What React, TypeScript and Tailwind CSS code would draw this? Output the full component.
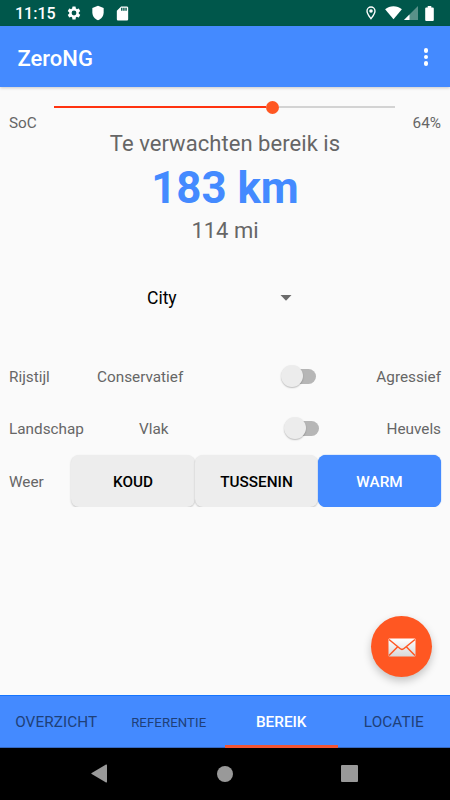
import React from "react";

function StatusBar() {
  return (
    <div className="flex h-[26px] items-center bg-[#00574b] pl-[15px] text-white">
      <span className="mt-[2px] w-[51px] text-[16px] leading-[26px] font-medium">11:15</span>
      <svg className="h-[16px] w-[16px]" viewBox="0 0 24 24" fill="currentColor">
        <path d="M19.14 12.94c.04-.3.06-.61.06-.94 0-.32-.02-.64-.07-.94l2.03-1.58a.49.49 0 0 0 .12-.61l-1.92-3.32a.49.49 0 0 0-.59-.22l-2.39.96a7 7 0 0 0-1.62-.94l-.36-2.54a.48.48 0 0 0-.48-.41h-3.84a.47.47 0 0 0-.47.41l-.36 2.54c-.59.24-1.13.57-1.62.94l-2.39-.96a.48.48 0 0 0-.59.22L2.74 8.87a.47.47 0 0 0 .12.61l2.03 1.58c-.05.3-.09.63-.09.94s.02.64.07.94l-2.03 1.58a.49.49 0 0 0-.12.61l1.92 3.32c.12.22.37.29.59.22l2.39-.96c.5.38 1.03.7 1.62.94l.36 2.54c.05.24.24.41.48.41h3.84c.24 0 .44-.17.47-.41l.36-2.54a7 7 0 0 0 1.62-.94l2.39.96c.22.08.47 0 .59-.22l1.92-3.32a.47.47 0 0 0-.12-.61zM12 15.6A3.6 3.6 0 1 1 12 8.4a3.6 3.6 0 0 1 0 7.2z" />
      </svg>
      <svg className="ml-[8px] h-[16px] w-[16px]" viewBox="0 0 24 24" fill="currentColor">
        <path d="M12 1 3.5 4.5V11c0 5.6 3.6 10.4 8.5 12 4.9-1.6 8.5-6.4 8.5-12V4.5z" />
      </svg>
      <svg className="ml-[8px] h-[17px] w-[17px]" viewBox="0 0 24 24" fill="currentColor">
        <path d="M18 2h-8L4 8v12c0 1.100.9 2 2 2h12c1.100 0 2-.9 2-2V4c0-1.100-.9-2-2-2zm-6 6h-2V4h2zm3 0h-2V4h2zm3 0h-2V4h2z" />
      </svg>
      <svg className="ml-auto h-[16px] w-[16px]" viewBox="0 0 24 24" fill="currentColor">
        <path d="M12 2a7 7 0 0 0-7 7c0 5.250 7 13 7 13s7-7.750 7-13a7 7 0 0 0-7-7zM7 9a5 5 0 0 1 10 0c0 2.880-2.880 7.190-5 9.880C9.920 16.210 7 11.850 7 9z" />
        <circle cx="12" cy="9" r="2.700" />
      </svg>
      <svg className="ml-[6px] h-[14px] w-[17px]" viewBox="0 0 17 14" fill="currentColor">
        <path d="M8.500 13.300.1 3.200C2.500 1.300 5.400.3 8.500.3s6 1 8.400 2.900z" />
      </svg>
      <svg className="ml-[2px] h-[14px] w-[14px]" viewBox="0 0 14 14">
        <path d="M14 0v14H0z" fill="#fff" opacity=".35" />
        <path d="M5.500 8.500V14H0z" fill="#fff" />
      </svg>
      <svg className="mr-[16px] ml-[7px] h-[15px] w-[9px]" viewBox="0 0 9 15" fill="currentColor">
        <path d="M2.700 0h3.600v1.500h1.500q1 0 1 1V14q0 1-1 1H1.200q-1 0-1-1V2.500q0-1 1-1h1.500z" />
      </svg>
    </div>
  );
}

function Toggle() {
  return (
    <div className="relative h-[23px] w-[36px]">
      <div className="mt-[4px] ml-[4px] h-[15px] w-[31px] rounded-full bg-[#b6b6b6]" />
      <div className="absolute top-0 left-0 size-[22px] rounded-full bg-[#ececec] shadow-[0_1px_1.500px_rgba(0,0,0,0.25)]" />
    </div>
  );
}

const tabs = [
  { label: "OVERZICHT", style: "text-[15.3px] text-[#1f4078] font-normal tracking-[0.1px]" },
  { label: "REFERENTIE", style: "text-[13.2px] text-[#1f4078] font-normal tracking-[0.1px]" },
  { label: "BEREIK", style: "text-[15.3px] text-white font-medium" },
  { label: "LOCATIE", style: "text-[15.3px] text-[#1f4078] font-normal tracking-[0.1px]" },
];

export default function App() {
  return (
    <div className="flex h-[800px] w-[450px] flex-col overflow-hidden bg-[#fafafa] font-[Roboto,sans-serif] text-[15.3px] text-[#666]">
      <StatusBar />
      <header className="relative flex h-[61px] items-center justify-between bg-[#448aff] pr-[22px] pl-[17.500px] text-white shadow-[0_1px_3px_rgba(0,0,0,0.2)]">
        <h1 className="mt-[4px] text-[22px] leading-[26px] font-medium">ZeroNG</h1>
        <div className="mt-px flex flex-col gap-[2px]">
          <i className="size-[4.500px] rounded-full bg-white" />
          <i className="size-[4.500px] rounded-full bg-white" />
          <i className="size-[4.500px] rounded-full bg-white" />
        </div>
      </header>

      <main className="relative flex h-[608px] flex-col">
        <section className="flex h-[43px] justify-between px-[9px]">
          <span className="mt-[26px] w-[45px] leading-[20px]">SoC</span>
          <div className="mt-[13px] flex h-[14px] w-[341px] items-center">
            <div className="h-[2px] w-[212px] bg-[#ff3310]" />
            <div className="size-[13px] rounded-full bg-[#ff5722]" />
            <div className="h-[2px] flex-1 bg-[#d3d3d3]" />
          </div>
          <span className="mt-[26px] w-[46px] text-right leading-[20px]">64%</span>
        </section>
        <section className="flex flex-col items-center pt-px">
          <p className="text-[22px] leading-[26px] tracking-[0.05px]">Te verwachten bereik is</p>
          <p className="mt-[5px] text-[43.800px] leading-[52px] font-bold text-[#448aff]">183 km</p>
          <p className="mt-[4px] text-[22px] leading-[26px]">114 mi</p>
        </section>
        <section className="mt-[41px] flex h-[26px] items-center pl-[147px] text-[17.500px] text-black">
          <span className="w-[133px]">City</span>
          <svg className="-mt-px h-[6px] w-[12px]" viewBox="0 0 12 6" fill="#6b6b6b">
            <path d="M.5 0h11L6 5.800z" />
          </svg>
        </section>
        <section className="mt-[39px] flex h-[52px] items-center px-[9px]">
          <span className="w-[88px] pt-[2px]">Rijstijl</span>
          <span className="w-[184px] pt-[2px]">Conservatief</span>
          <Toggle />
          <span className="ml-auto pt-[2px]">Agressief</span>
        </section>
        <section className="flex h-[52px] items-center px-[9px]">
          <span className="w-[130px] pt-[2px]">Landschap</span>
          <span className="w-[145px] pt-[2px]">Vlak</span>
          <Toggle />
          <span className="ml-auto pt-[2px]">Heuvels</span>
        </section>
        <section className="flex h-[53px] items-center overflow-hidden pr-[9px] pl-[9px]">
          <span className="w-[62px] pt-[3px]">Weer</span>
          <button className="h-[52px] w-[124px] rounded-[8px] bg-[#ededed] pt-[3px] font-medium text-black shadow-[0_1px_2px_rgba(0,0,0,0.22)]">KOUD</button>
          <button className="h-[52px] w-[123px] rounded-[8px] bg-[#ededed] pt-[3px] font-medium text-black shadow-[0_1px_2px_rgba(0,0,0,0.22)]">TUSSENIN</button>
          <button className="h-[52px] w-[123px] rounded-[8px] bg-[#448aff] pt-[3px] font-medium text-white shadow-[0_0_1px_#0868f5]">WARM</button>
        </section>
        <button className="absolute top-[529px] left-[371px] flex size-[61px] items-center justify-center rounded-full bg-[#ff5722] shadow-[0_4px_8px_rgba(0,0,0,0.22)]">
          <svg className="mt-px h-[19px] w-[28px]" viewBox="0 0 28 19">
            <defs>
              <linearGradient id="mail" x1="0" y1="0" x2="0" y2="1">
                <stop offset="0" stopColor="#fff" />
                <stop offset="1" stopColor="#d8d8d8" />
              </linearGradient>
            </defs>
            <rect x=".5" y=".5" width="27" height="18" rx="1" fill="url(#mail)" />
            <path d="m1 1.500 11 9q2 1.700 4 0l11-9M1 17.500l8.700-8.800m17.300 8.800-8.700-8.800" fill="none" stroke="#ff5722" strokeWidth="1.500" />
          </svg>
        </button>
      </main>

      <nav className="grid h-[53px] grid-cols-4 border-t border-b border-t-[#1575ff] border-b-[#3568c0] bg-[#448aff]">
        {tabs.map((tab) => (
          <button key={tab.label} className={`relative flex items-center justify-center pt-[2px] ${tab.style}`}>
            {tab.label}
            {tab.label === "BEREIK" && <i className="absolute -bottom-px left-0 h-[3px] w-full bg-[#f05535]" />}
          </button>
        ))}
      </nav>
      <footer className="flex h-[52px] items-center bg-black pl-[91px]">
        <svg className="-mt-px h-[19px] w-[16px]" viewBox="0 0 16 19" fill="#999">
          <path d="M15 .5q1-.4 1 .7v16.600q0 1-1 .6L.7 10q-.8-.5 0-1z" />
        </svg>
        <div className="-mt-px ml-[110px] size-[16px] rounded-full bg-[#999]" />
        <div className="-mt-px ml-[108px] size-[17px] rounded-[1px] bg-[#999]" />
      </footer>
    </div>
  );
}
